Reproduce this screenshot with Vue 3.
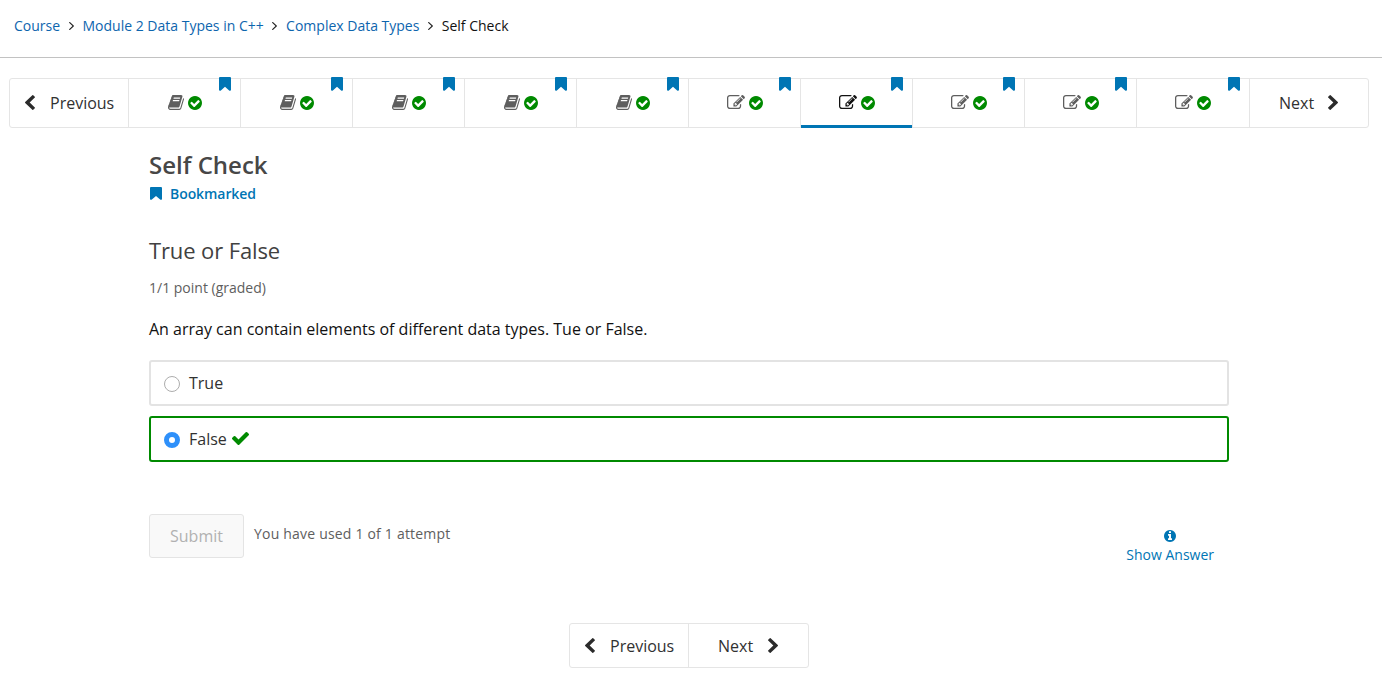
<script setup>
import { h } from 'vue'

const icons = {
  book: ['64 128 1668 1536', 'M1703 478q40 57 18 129l-275 906q-19 64-76.5 107.5t-122.5 43.5h-923q-77 0-148.5-53.5t-99.5-131.5q-24-67-2-127 0-4 3-27t4-37q1-8-3-21.5t-3-19.5q2-11 8-21t16.5-23.5 16.5-23.5q23-38 45-91.5t30-91.5q3-10 .5-30t-.5-28q3-11 17-28t17-23q21-36 42-92t25-90q1-9-2.5-32t.5-28q4-13 22-30.5t22-22.5q19-26 42.5-84.5t27.5-96.5q1-8-3-25.5t-2-26.5q2-8 9-18t18-23 17-21q8-12 16.5-30.5t15-35 16-36 19.5-32 26.5-23.5 36-11.5 47.5 5.5l-1 3q38-9 51-9h761q74 0 114 56t18 130l-274 906q-36 119-71.5 153.5t-128.5 34.5h-869q-27 0-38 15-11 16-1 43 24 70 144 70h923q29 0 56-15.5t35-41.5l300-987q7-22 5-57 38 15 59 43zm-1064 2q-4 13 2 22.5t20 9.5h608q13 0 25.5-9.5t16.5-22.5l21-64q4-13-2-22.5t-20-9.5h-608q-13 0-25.5 9.5t-16.5 22.5zm-83 256q-4 13 2 22.5t20 9.5h608q13 0 25.5-9.5t16.5-22.5l21-64q4-13-2-22.5t-20-9.5h-608q-13 0-25.5 9.5t-16.5 22.5z'],
  done: ['128 128 1536 1536', 'M1412 734q0-28-18-46l-91-90q-19-19-45-19t-45 19l-408 407-226-226q-19-19-45-19t-45 19l-91 90q-18 18-18 46 0 27 18 45l362 362q19 19 45 19 27 0 46-19l543-543q18-18 18-45zm252 162q0 209-103 385.5t-279.5 279.5-385.5 103-385.5-103-279.5-279.5-103-385.5 103-385.5 279.5-279.5 385.5-103 385.5 103 279.5 279.5 103 385.5z'],
  edit: ['0 128 1792 1408', 'M888 1184l116-116-152-152-116 116v56h96v96h56zm440-720q-16-16-33 1l-350 350q-17 17-1 33t33-1l350-350q17-17 1-33zm80 594v190q0 119-84.5 203.5t-203.5 84.5h-832q-119 0-203.5-84.5t-84.5-203.5v-832q0-119 84.5-203.5t203.5-84.5h832q63 0 117 25 15 7 18 23 3 17-9 29l-49 49q-14 14-32 8-23-6-45-6h-832q-66 0-113 47t-47 113v832q0 66 47 113t113 47h832q66 0 113-47t47-113v-126q0-13 9-22l64-64q15-15 35-7t20 29zm-96-738l288 288-672 672h-288v-288zm444 132l-92 92-288-288 92-92q28-28 68-28t68 28l152 152q28 28 28 68t-28 68z'],
  bookmark: ['256 128 1280 1536', 'M1420 128q23 0 44 9 33 13 52.5 41t19.5 62v1289q0 34-19.5 62t-52.5 41q-19 8-44 8-48 0-83-32l-441-424-441 424q-36 33-83 33-23 0-44-9-33-13-52.5-41t-19.5-62v-1289q0-34 19.5-62t52.5-41q21-9 44-9h1048z'],
  check: ['121 334 1550 1188', 'M1671 566q0 40-28 68l-724 724-136 136q-28 28-68 28t-68-28l-136-136-362-362q-28-28-28-68t28-68l136-136q28-28 68-28t68 28l294 295 656-657q28-28 68-28t68 28l136 136q28 28 28 68z'],
  left: ['410 26 1036 1612', 'M1427 301l-531 531 531 531q19 19 19 45t-19 45l-166 166q-19 19-45 19t-45-19l-742-742q-19-19-19-45t19-45l742-742q19-19 45-19t45 19l166 166q19 19 19 45t-19 45z'],
  right: ['346 26 1036 1612', 'M1363 877l-742 742q-19 19-45 19t-45-19l-166-166q-19-19-19-45t19-45l531-531-531-531q-19-19-19-45t19-45l166-166q19-19 45-19t45 19l742 742q19 19 19 45t-19 45z'],
  angle: ['589 461 582 998', 'M1171 960q0 13-10 23l-466 466q-10 10-23 10t-23-10l-50-50q-10-10-10-23t10-23l393-393-393-393q-10-10-10-23t10-23l50-50q10-10 23-10t23 10l466 466q10 10 10 23z'],
  info: ['128 128 1536 1536', 'M1152 1376v-160q0-14-9-23t-23-9h-96v-512q0-14-9-23t-23-9h-320q-14 0-23 9t-9 23v160q0 14 9 23t23 9h96v320h-96q-14 0-23 9t-9 23v160q0 14 9 23t23 9h448q14 0 23-9t9-23zm-128-896v-160q0-14-9-23t-23-9h-192q-14 0-23 9t-9 23v160q0 14 9 23t23 9h192q14 0 23-9t9-23zm640 416q0 209-103 385.5t-279.5 279.5-385.5 103-385.5-103-279.5-279.5-103-385.5 103-385.5 279.5-279.5 385.5-103 385.5 103 279.5 279.5 103 385.5z']
}

const Icon = ({ name }) =>
  h('svg', { viewBox: icons[name][0], preserveAspectRatio: 'none', fill: 'currentColor', 'aria-hidden': 'true' }, [
    h('path', { d: icons[name][1] })
  ])
Icon.props = ['name']

const crumbs = ['Course', 'Module 2 Data Types in C++', 'Complex Data Types']
const units = Array.from({ length: 10 }, (_, i) => ({
  icon: i < 5 ? 'book' : 'edit',
  active: i === 6
}))
</script>

<template>
  <div class="page">
    <nav class="crumbs">
      <template v-for="c in crumbs" :key="c">
        <a>{{ c }}</a>
        <Icon name="angle" class="sep" />
      </template>
      <span>Self Check</span>
    </nav>

    <nav class="sequence">
      <button class="step prev"><Icon name="left" class="chev" />Previous</button>
      <div v-for="(u, i) in units" :key="i" class="unit" :class="{ active: u.active }">
        <Icon :name="u.icon" :class="['kind', u.icon]" />
        <Icon name="done" class="done" />
        <Icon name="bookmark" class="flag" />
      </div>
      <button class="step next">Next<Icon name="right" class="chev" /></button>
    </nav>

    <main>
      <h1>Self Check</h1>
      <div class="bookmarked"><Icon name="bookmark" class="mark" />Bookmarked</div>
      <h2>True or False</h2>
      <p class="points">1/1 point (graded)</p>
      <p class="question">An array can contain elements of different data types. Tue or False.</p>
      <label class="choice"><i class="radio"></i>True</label>
      <label class="choice correct"><i class="radio on"></i>False<Icon name="check" class="tick" /></label>
      <div class="actions">
        <button class="submit" disabled>Submit</button>
        <span class="attempts">You have used 1 of 1 attempt</span>
        <a class="show"><Icon name="info" class="info" />Show Answer</a>
      </div>
    </main>

    <nav class="bottom">
      <button class="step prev"><Icon name="left" class="chev" />Previous</button>
      <button class="step next">Next<Icon name="right" class="chev" /></button>
    </nav>
  </div>
</template>

<style>
body { background: #fff; }
</style>

<style scoped>
.page {
  box-sizing: border-box;
  height: 699px;
  overflow: hidden;
  font-family: "Open Sans", sans-serif;
  font-size: 16px;
  color: #313131;
  white-space: nowrap;
}
.page * { box-sizing: border-box; }
svg { display: block; flex: none; }
button { font: inherit; color: inherit; background: none; border: 0; padding: 0; margin: 0; }
h1, h2, p { margin: 0; }

.crumbs {
  display: flex;
  align-items: center;
  height: 58px;
  padding: 0 14px 6px;
  border-bottom: 1px solid #c2c2c2;
  font-size: 14px;
  line-height: 20px;
  color: #111;
}
.crumbs a { color: #0d65ae; }
.sep { width: 5px; height: 8px; margin: 1px 8.75px 0 8.65px; color: #222; }

.sequence {
  display: flex;
  height: 50px;
  margin: 20px 13px 0 9px;
  border: 1px solid #e5e5e5;
  border-radius: 3px;
}
.step { display: flex; align-items: center; line-height: 22px; }
.prev { width: 119px; padding-left: 15px; border-right: 1px solid #e5e5e5; }
.prev .chev { margin-right: 15px; }
.next { width: 118px; padding-left: 29px; }
.next .chev { margin-left: 15px; }
.sequence .next .chev { margin-left: 14px; }
.chev { width: 10px; height: 15px; margin-bottom: 1px; color: #2b2b2b; }
.unit {
  position: relative;
  flex: 0 0 112px;
  display: flex;
  align-items: center;
  justify-content: center;
  border-right: 1px solid #e5e5e5;
  color: #5e5e5e;
}
.unit:nth-last-child(2) { flex-basis: 113px; }
.kind.book { width: 16px; height: 15px; margin: 0 4px 1px 0; }
.kind.edit { width: 18px; height: 14px; margin: 0 4px 2px 0; }
.done { width: 14px; height: 14px; color: #008a00; }
.flag { position: absolute; top: -2px; right: 9px; width: 12px; height: 14px; color: #0075b4; }
.active { color: #111; }
.active::after {
  content: "";
  position: absolute;
  left: 0;
  right: 0;
  bottom: -1px;
  height: 3px;
  background: #0075b4;
}

main { width: 1080px; margin: 21px 0 0 149px; }
h1 { font-size: 24px; line-height: 32px; font-weight: 600; color: #474747; }
.bookmarked {
  display: flex;
  align-items: center;
  height: 20px;
  margin-top: 2px;
  padding-left: 1px;
  font-size: 14px;
  font-weight: 600;
  letter-spacing: -0.07px;
  color: #0075b4;
}
.mark { width: 12px; height: 13px; margin-right: 8px; }
h2 { margin-top: 31px; font-size: 22px; line-height: 32px; font-weight: 400; letter-spacing: -0.12px; color: #414141; }
.points { margin-top: 12px; font-size: 14px; line-height: 20px; color: #5e5e5e; }
.question { margin-top: 19px; font-size: 16px; line-height: 24px; color: #111; }
.choice {
  display: flex;
  align-items: center;
  height: 46px;
  margin-top: 19px;
  padding-left: 13px;
  border: 2px solid #e3e3e3;
  border-radius: 3px;
}
.correct { margin-top: 10px; border-color: #008a00; }
.radio {
  width: 16px;
  height: 16px;
  margin: 2px 9px 0 0;
  border: 1px solid #adadad;
  border-radius: 50%;
}
.radio.on { border: 5px solid #2e90fa; }
.tick { width: 17px; height: 13px; margin: 0 0 2px 5px; color: #008a00; }
.actions { display: flex; height: 52px; margin-top: 52px; }
.submit {
  width: 95px;
  height: 44px;
  border: 1px solid #e4e4e4;
  border-radius: 3px;
  background: #f9f9f9;
  color: #b1b1b1;
}
.attempts { margin-left: 10px; font-size: 14px; line-height: 40px; letter-spacing: 0.2px; color: #5e5e5e; }
.show {
  display: flex;
  flex-direction: column;
  align-items: center;
  margin: 16px 15px 0 auto;
  font-size: 14px;
  line-height: 20px;
  color: #0075b4;
}
.info { width: 12px; height: 12px; margin-bottom: 3px; }

.bottom {
  display: flex;
  width: 240px;
  height: 45px;
  margin: 57px 0 0 569px;
  border: 1px solid #e5e5e5;
  border-radius: 3px;
}
</style>
